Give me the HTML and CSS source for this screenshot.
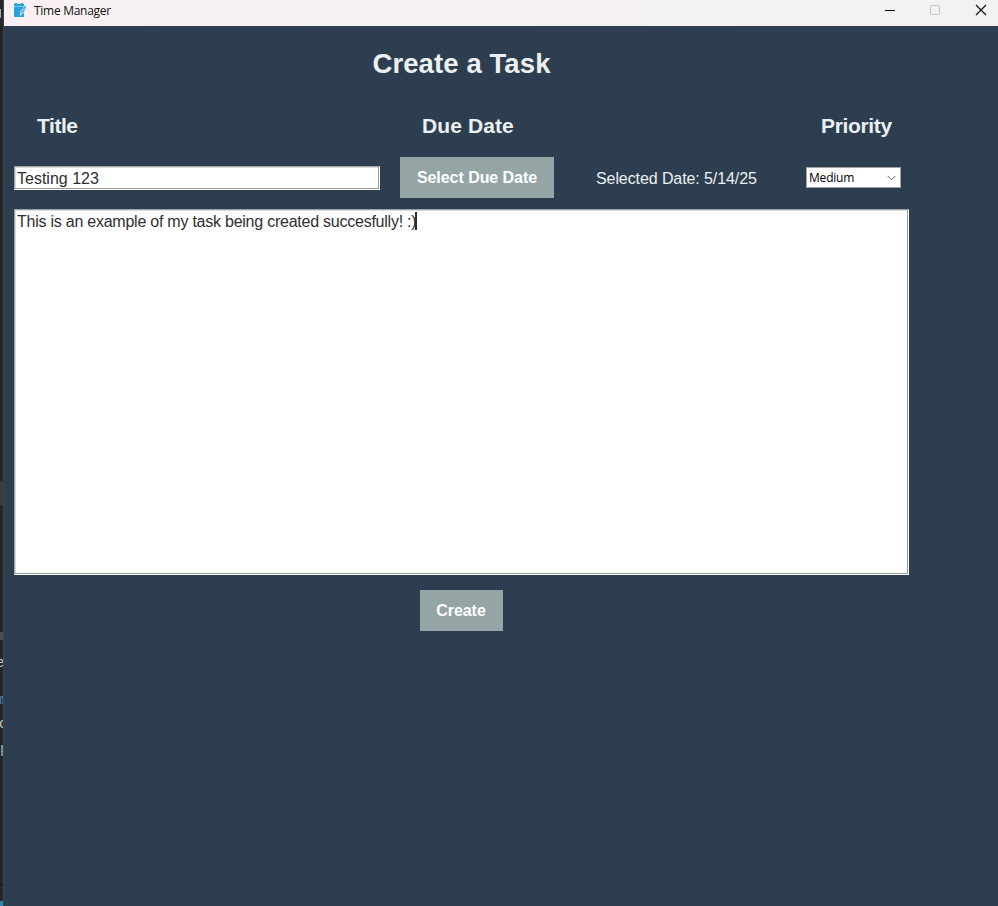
FILE: index.html
```html
<!DOCTYPE html>
<html lang="en">
<head>
<meta charset="utf-8">
<title>Time Manager</title>
<link rel="stylesheet" href="styles.css">
</head>
<body>
<div class="screen">
  <aside class="backdrop">
    <span class="tab"></span>
    <span class="band"></span>
    <span class="line"></span>
    <span class="code code-e">e</span>
    <span class="code code-m">m</span>
    <span class="code code-c">c</span>
    <span class="code code-p">p</span>
    <span class="rule"></span>
    <span class="corner"></span>
  </aside>
  <div class="window">
    <header class="titlebar">
      <svg class="app-icon" width="14" height="15" viewBox="0 0 14 15">
        <path d="M1 1h1V0h2v1h4V0h2v1h1v4L7.500 8v3h1.500l2-1.500V14H1z" fill="#25a3df"/>
        <path d="M1 3.500h10" stroke="#9bd6f2" stroke-width=".8"/>
        <path d="M7 12.500l.8-4L12 2.500l1.300.5-.6 3-1.200 1 .5 1-2.500 2.500z" fill="#25a3df" stroke="#f6f1f2" stroke-width=".6"/>
        <path d="M7.500 12L11.500 5.500" stroke="#d5edf8" stroke-width=".7"/>
      </svg>
      <span class="app-name">Time Manager</span>
      <svg class="controls" width="104" height="16" viewBox="0 0 104 16">
        <path d="M1 8.500h10" stroke="#000"/>
        <rect x="46.500" y="3.500" width="9" height="9" rx="1" fill="none" stroke="#c5c3c3"/>
        <path d="M92 3l10 10M102 3L92 13" stroke="#111" stroke-width="1.200"/>
      </svg>
    </header>
    <main class="content">
      <h1>Create a Task</h1>
      <div class="grid labels">
        <h2 class="title-label">Title</h2>
        <h2 class="date-label">Due Date</h2>
        <h2 class="priority-label">Priority</h2>
      </div>
      <div class="grid fields">
        <div class="entry">Testing 123</div>
        <button class="button select-date">Select Due Date</button>
        <span class="selected">Selected Date: 5/14/25</span>
        <div class="combo"><span>Medium</span>
          <svg width="9" height="6" viewBox="0 0 9 6"><path d="M.5 .8l4 4 4-4" fill="none" stroke="#606060"/></svg>
        </div>
      </div>
      <div class="description"><span>This is an example of my task being created succesfully! :)</span><i class="caret"></i></div>
      <button class="button create">Create</button>
    </main>
  </div>
</div>
</body>
</html>
```

FILE: styles.css
```css
* { box-sizing: border-box; }
body {
  margin: 0;
  overflow: hidden;
  font-family: "Liberation Sans", Arial, sans-serif;
}
.screen { display: flex; width: 998px; height: 906px; background: #2d3e50; }

.backdrop {
  position: relative;
  flex: none;
  width: 4px;
  overflow: hidden;
  background: #25262a;
  border-right: 1px solid #404448;
}
.backdrop span { position: absolute; left: 0; width: 4px; }
.tab { top: 9px; height: 9px; background: linear-gradient(90deg, #aaa 1px, transparent 1px); }
.band { top: 481px; height: 24px; background: #3b3c40; }
.line { top: 632px; height: 8px; background: #4a4b4e; }
.rule { top: 884px; height: 1px; background: #111; }
.corner { top: 901px; height: 5px; background: #2c87b5; }
.backdrop .code {
  left: -4px;
  width: auto;
  font: 14px/16px "Liberation Mono", monospace;
  color: #c8c8c8;
}
.code-e { top: 655px; }
.backdrop .code-m { top: 692px; color: #4b8fd8; }
.backdrop .code-c { top: 716px; left: -1px; }
.backdrop .code-p { top: 741px; left: 0; color: #9fb8a4; }

.window { flex: 1; display: flex; flex-direction: column; }
.titlebar {
  display: flex;
  align-items: flex-start;
  height: 26px;
  padding: 3px 12px 0 9px;
  background: linear-gradient(90deg, #f8f0f2, #f3f2f1);
}
.app-icon { flex: none; }
.app-name {
  margin-left: 7px;
  font: 12px/15px "Open Sans", "Noto Sans", sans-serif;
  letter-spacing: -.28px;
  color: #111;
}
.controls { margin: -1px -2px 0 auto; }

.content { width: 905px; padding-left: 10px; color: #ecf0f1; }
h1, h2 { margin: 0; font-weight: bold; white-space: nowrap; }
h1 {
  margin-top: 22px;
  font-size: 27.5px;
  line-height: 32px;
  letter-spacing: .1px;
  text-align: center;
}
.grid { display: grid; }
.labels { grid-template-columns: 408px 399px 88px; margin-top: 34px; }
h2 { font-size: 21px; line-height: 24px; }
.title-label { padding-left: 23px; letter-spacing: -.45px; }
.date-label { letter-spacing: .1px; }
.priority-label { letter-spacing: -.35px; }
.fields {
  grid-template-columns: 386px 196px 210px 95px;
  align-items: center;
  height: 41px;
  margin-top: 19px;
}
.entry, .description {
  background: #fff;
  border: 1px solid #a0a0a0;
  border-right-color: #fff;
  border-bottom-color: #fff;
  box-shadow: inset -1px -1px #9a9a9a, inset 1px 1px #ddd;
  color: #2f2f2f;
  font-size: 16px;
}
.entry { width: 366px; height: 24px; padding: 2px; line-height: 19px; }
.button {
  display: block;
  height: 41px;
  padding: 0;
  border: 0;
  background: #95a5a6;
  color: #fff;
  font: bold 16px/41px "Liberation Sans", Arial, sans-serif;
  letter-spacing: -.05px;
}
.select-date { width: 154px; }
.selected { padding-top: 2px; font-size: 16px; letter-spacing: -.09px; }
.combo {
  display: flex;
  align-items: center;
  justify-content: space-between;
  width: 95px;
  height: 21px;
  padding: 0 4px 0 2px;
  border: 1px solid #a0a0a0;
  background: #fff;
  color: #000;
  font: 12px/18px "Open Sans", "Noto Sans", sans-serif;
  letter-spacing: -.2px;
}
.description {
  display: flex;
  width: 895px;
  height: 366px;
  margin-top: 11px;
  padding: 2px;
  line-height: 20px;
  letter-spacing: -.24px;
}
.caret { width: 2px; height: 18px; margin: 0 0 0 -1px; background: #2f2f2f; }
.create { width: 83px; margin: 15px 0 0 406px; padding-right: 1px; }
```
